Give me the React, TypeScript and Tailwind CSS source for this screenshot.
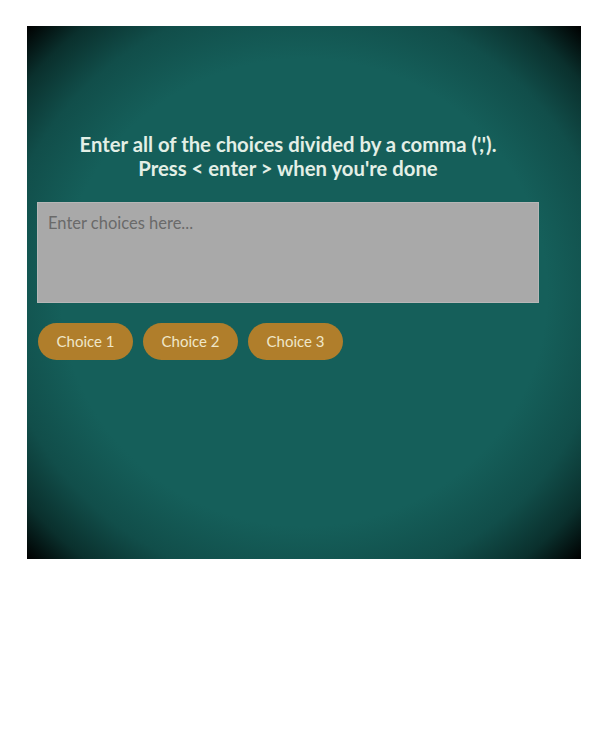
import { useEffect, useRef } from 'react';

const choices = ['Choice 1', 'Choice 2', 'Choice 3'];

export default function App() {
  const inputRef = useRef<HTMLTextAreaElement>(null);

  useEffect(() => {
    inputRef.current?.focus();
  }, []);

  return (
    <div className="min-h-[745px] bg-white pt-[26px] pl-[27px]">
      <div className="w-[554px] h-[533px] bg-[radial-gradient(ellipse_at_center,#155f5a_62%,#114e4a_78%,#0a302d_90%,#000_100%)] pt-[106px] pl-[10px]">
        <div className="w-[502px] flex flex-col">
          <h1 className="text-center text-[20.3px] leading-[24px] font-bold text-[#e3efe6] font-['Lato','Noto_Sans',sans-serif]">
            Enter all of the choices divided by a comma (',').
            <br />
            Press &lt; enter &gt; when you're done
          </h1>
          <textarea
            ref={inputRef}
            placeholder="Enter choices here..."
            className="mt-[22px] h-[101px] w-full resize-none bg-[#a9a9a9] border border-[#b7b7b7] px-[10px] py-[10px] text-[16.5px] leading-[21px] text-[#333] placeholder:text-[#6a6a6a] outline-none font-['Lato','Noto_Sans',sans-serif] caret-[#333]"
          />
          <div className="mt-[20px] flex gap-[10px] pl-[1px]">
            {choices.map((c) => (
              <button
                key={c}
                className="w-[95px] h-[37px] rounded-full bg-[#b07e2b] text-[#efe7c9] text-[15px] font-['Lato','Noto_Sans',sans-serif]"
              >
                {c}
              </button>
            ))}
          </div>
        </div>
      </div>
    </div>
  );
}
